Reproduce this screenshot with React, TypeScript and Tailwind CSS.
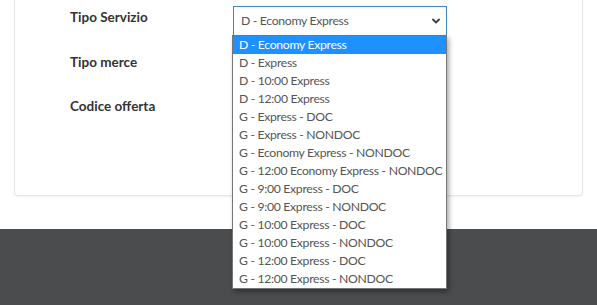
import { ChevronDown } from "lucide-react";

const options = [
  "D - Economy Express",
  "D - Express",
  "D - 10:00 Express",
  "D - 12:00 Express",
  "G - Express - DOC",
  "G - Express - NONDOC",
  "G - Economy Express - NONDOC",
  "G - 12:00 Economy Express - NONDOC",
  "G - 9:00 Express - DOC",
  "G - 9:00 Express - NONDOC",
  "G - 10:00 Express - DOC",
  "G - 10:00 Express - NONDOC",
  "G - 12:00 Express - DOC",
  "G - 12:00 Express - NONDOC",
];

const font = { fontFamily: "Lato, 'Liberation Sans', sans-serif" };

const Row = ({ label, children }: { label: string; children?: React.ReactNode }) => (
  <div className="flex h-[44.5px]">
    <div className="w-[163px] pt-[1px] text-[13.5px] font-bold text-[#333]">{label}</div>
    <div className="w-[214px]">{children}</div>
  </div>
);

export default function App() {
  const selected = 0;
  return (
    <div className="relative h-[305px] w-[597px] overflow-hidden bg-white" style={font}>
      <div className="mx-[14px] h-[196px] rounded-b-[4px] border border-t-0 border-[#e6e6e6] pl-[55px] pt-[6px] shadow-[0_1px_2px_rgba(0,0,0,0.05)]">
        <Row label="Tipo Servizio">
          <div className="flex h-[30px] items-center justify-between border border-[#3c8dbc] bg-white pl-[7px] pr-[4px] text-[12.2px] tracking-[-0.3px] text-[#555]">
            <span className="whitespace-nowrap">D - Economy Express</span>
            <ChevronDown size={12} strokeWidth={4} className="text-[#444]" />
          </div>
        </Row>
        <Row label="Tipo merce" />
        <Row label="Codice offerta" />
      </div>
      <div className="mt-[33px] h-[76px] bg-[#4b4c4e]" />

      <ul className="absolute left-[232px] top-[35px] w-[215px] border border-[#767676] bg-white text-[12.2px] tracking-[-0.3px] text-[#555] shadow-[2px_3px_5px_rgba(0,0,0,0.35)]">
        {options.map((o, i) => (
          <li
            key={o}
            className={
              i === selected
                ? "flex h-[18px] items-center whitespace-nowrap bg-[#1e90ff] pl-[6px] text-white"
                : "flex h-[18px] items-center whitespace-nowrap pl-[6px]"
            }
          >
            {o}
          </li>
        ))}
      </ul>
    </div>
  );
}
